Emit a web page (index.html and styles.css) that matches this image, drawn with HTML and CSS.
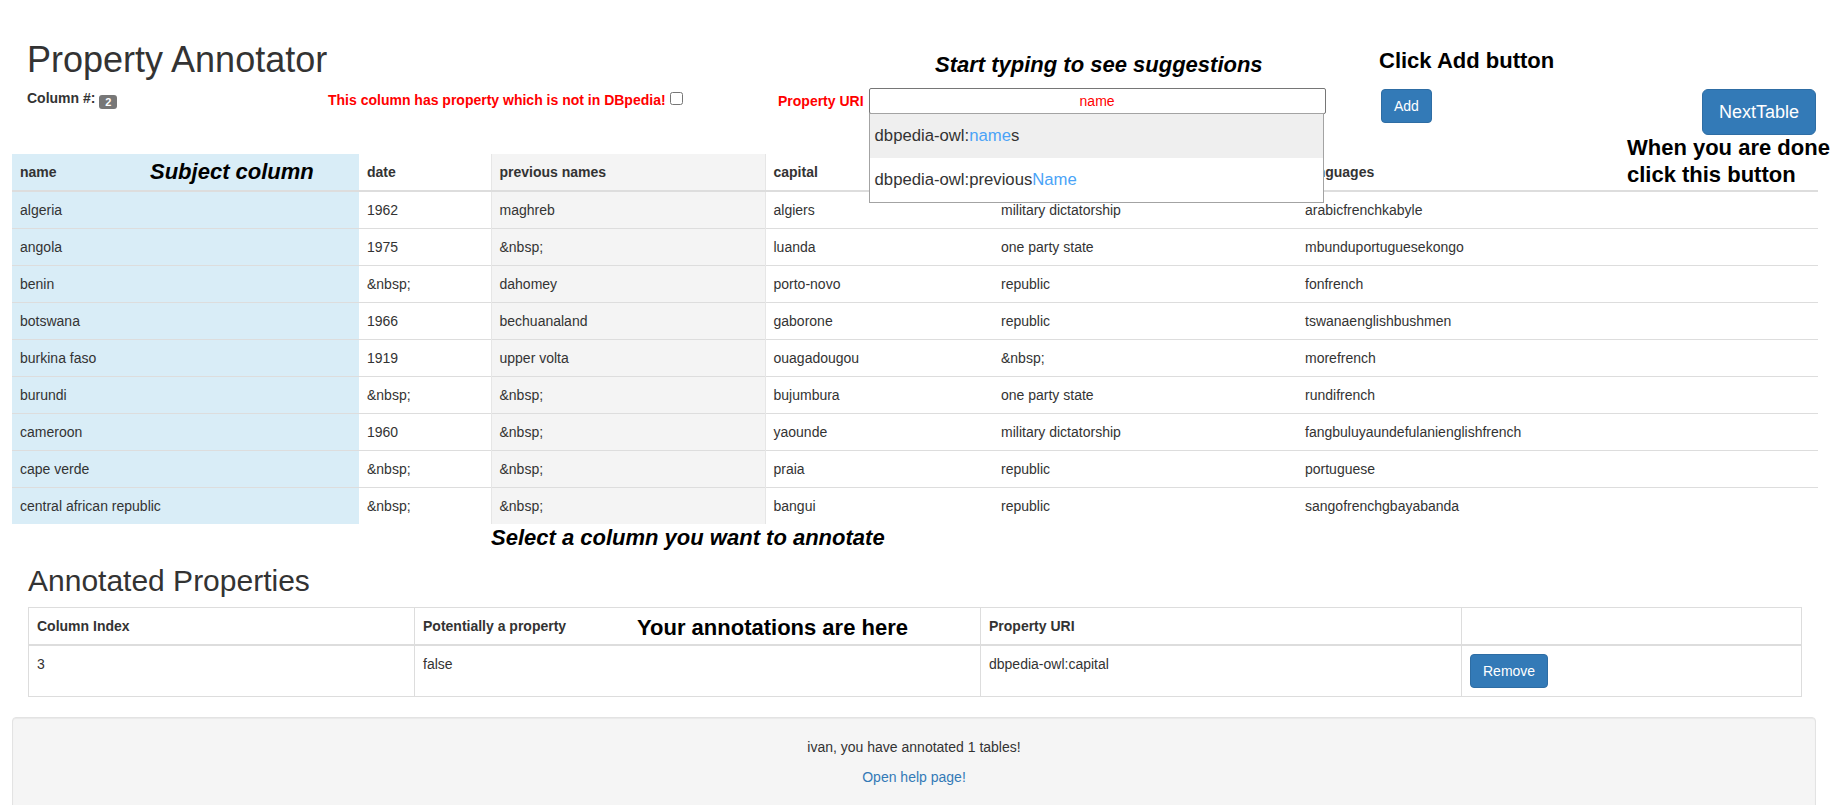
FILE: index.html
```html
<!DOCTYPE html>
<html lang="en">
<head>
<meta charset="utf-8">
<title>Property Annotator</title>
<link rel="stylesheet" href="styles.css">
</head>
<body>
<header class="toolbar">
  <div class="title-col">
    <h1 class="title">Property Annotator</h1>
    <div class="col-num">Column #: <span class="num-badge">2</span></div>
  </div>
  <div class="flag-col">
    <label class="flag">This column has property which is not in DBpedia!<input type="checkbox" class="flag-check"></label>
  </div>
  <div class="uri-col">
    <div class="hint hint-italic hint-typing">Start typing to see suggestions</div>
    <div class="uri-row">
      <label class="uri-label">Property URI</label>
      <div class="uri-field">
        <input class="uri-input" type="text" value="name">
        <ul class="suggest">
          <li class="suggest-item is-active">dbpedia-owl:<span class="hl">name</span>s</li>
          <li class="suggest-item">dbpedia-owl:previous<span class="hl">Name</span></li>
        </ul>
      </div>
    </div>
  </div>
  <div class="add-col">
    <div class="hint hint-add">Click Add button</div>
    <button class="btn btn-primary btn-add">Add</button>
  </div>
  <div class="next-col">
    <button class="btn btn-primary btn-lg">NextTable</button>
    <div class="hint hint-done">When you are done<br>click this button</div>
  </div>
</header>

<table class="data-table">
  <colgroup>
    <col class="w-name"><col class="w-date"><col class="w-prev"><col class="w-cap"><col class="w-gov"><col class="w-lang">
  </colgroup>
  <thead>
    <tr>
      <th class="name-head">name<span class="hint hint-italic hint-subject">Subject column</span></th>
      <th>date</th>
      <th>previous names</th>
      <th>capital</th>
      <th>government type</th>
      <th>languages</th>
    </tr>
  </thead>
  <tbody>
    <tr><td>algeria</td><td>1962</td><td>maghreb</td><td>algiers</td><td>military dictatorship</td><td>arabicfrenchkabyle</td></tr>
    <tr><td>angola</td><td>1975</td><td>&amp;nbsp;</td><td>luanda</td><td>one party state</td><td>mbunduportuguesekongo</td></tr>
    <tr><td>benin</td><td>&amp;nbsp;</td><td>dahomey</td><td>porto-novo</td><td>republic</td><td>fonfrench</td></tr>
    <tr><td>botswana</td><td>1966</td><td>bechuanaland</td><td>gaborone</td><td>republic</td><td>tswanaenglishbushmen</td></tr>
    <tr><td>burkina faso</td><td>1919</td><td>upper volta</td><td>ouagadougou</td><td>&amp;nbsp;</td><td>morefrench</td></tr>
    <tr><td>burundi</td><td>&amp;nbsp;</td><td>&amp;nbsp;</td><td>bujumbura</td><td>one party state</td><td>rundifrench</td></tr>
    <tr><td>cameroon</td><td>1960</td><td>&amp;nbsp;</td><td>yaounde</td><td>military dictatorship</td><td>fangbuluyaundefulanienglishfrench</td></tr>
    <tr><td>cape verde</td><td>&amp;nbsp;</td><td>&amp;nbsp;</td><td>praia</td><td>republic</td><td>portuguese</td></tr>
    <tr><td>central african republic</td><td>&amp;nbsp;</td><td>&amp;nbsp;</td><td>bangui</td><td>republic</td><td>sangofrenchgbayabanda</td></tr>
  </tbody>
</table>

<div class="hint hint-italic hint-select">Select a column you want to annotate</div>

<section class="annotated">
  <h2 class="section-title">Annotated Properties</h2>
  <table class="ann-table">
    <colgroup>
      <col class="a-idx"><col class="a-pot"><col class="a-uri"><col class="a-act">
    </colgroup>
    <thead>
      <tr>
        <th>Column Index</th>
        <th class="pot-head">Potentially a property<span class="hint hint-here">Your annotations are here</span></th>
        <th>Property URI</th>
        <th></th>
      </tr>
    </thead>
    <tbody>
      <tr>
        <td>3</td>
        <td>false</td>
        <td>dbpedia-owl:capital</td>
        <td><button class="btn btn-primary">Remove</button></td>
      </tr>
    </tbody>
  </table>
</section>

<footer class="well">
  <p>ivan, you have annotated 1 tables!</p>
  <p><a href="#help">Open help page!</a></p>
</footer>
</body>
</html>
```

FILE: styles.css
```css
* {
  box-sizing: border-box;
}

html,
body {
  margin: 0;
  overflow: hidden;
}

body {
  font-family: "Liberation Sans", Arial, sans-serif;
  font-size: 14px;
  line-height: 20px;
  color: #333;
  background: #fff;
}

/* ---------- top toolbar ---------- */
.toolbar {
  display: flex;
  align-items: flex-start;
  height: 154px;
}

.title-col {
  width: 301px;
  margin-left: 27px;
  padding-top: 40px;
}

.title {
  margin: 0;
  font-size: 36px;
  line-height: 40px;
  font-weight: 400;
  color: #333;
  white-space: nowrap;
}

.col-num {
  margin-top: 8px;
  font-weight: bold;
  line-height: 20px;
}

.num-badge {
  display: inline-block;
  width: 18px;
  height: 14px;
  background: #777;
  color: #fff;
  font-size: 11px;
  line-height: 14px;
  text-align: center;
  border-radius: 3px;
  vertical-align: -3px;
  font-weight: bold;
}

.flag-col {
  width: 450px;
  padding-top: 90px;
}

.flag {
  color: #f00;
  font-weight: bold;
  line-height: 20px;
  white-space: nowrap;
}

.flag-check {
  width: 13px;
  height: 13px;
  margin: 2px 0 0 4px;
  vertical-align: top;
}

.uri-col {
  width: 548px;
  padding-top: 52px;
}

.hint {
  font-weight: bold;
  color: #000;
  font-size: 22px;
  line-height: 25px;
  white-space: nowrap;
}

.hint-italic {
  font-style: italic;
}

.hint-typing {
  margin-left: 157px;
}

.uri-row {
  display: flex;
  align-items: center;
  margin-top: 11px;
}

.uri-label {
  color: #f00;
  font-weight: bold;
  margin-right: 5px;
  line-height: 20px;
  white-space: nowrap;
}

.uri-field {
  position: relative;
}

.uri-input {
  display: block;
  width: 457px;
  height: 26px;
  margin: 0;
  padding: 1px 2px;
  border: 1px solid #767676;
  border-radius: 2px;
  background: #fff;
  font-family: "Liberation Sans", Arial, sans-serif;
  font-size: 14px;
  color: #f00;
  text-align: center;
}

.suggest {
  position: absolute;
  left: 0;
  top: 25px;
  width: 455px;
  margin: 0;
  padding: 0;
  list-style: none;
  background: #fff;
  border: 1px solid #a3a3a3;
  z-index: 10;
}

.suggest-item {
  height: 44px;
  line-height: 44px;
  padding-left: 5px;
  font-size: 16.7px;
  color: #333;
  white-space: nowrap;
}

.suggest-item.is-active {
  background: #efefef;
}

.hl {
  color: #4aa3f7;
}

.add-col {
  margin-left: 53px;
  padding-top: 48px;
}

.btn {
  display: inline-block;
  padding: 6px 12px;
  font-family: "Liberation Sans", Arial, sans-serif;
  font-size: 14px;
  line-height: 20px;
  border: 1px solid #2e6da4;
  border-radius: 4px;
  background: #337ab7;
  color: #fff;
  cursor: pointer;
  white-space: nowrap;
}

.btn-add {
  display: block;
  margin: 16px 0 0 2px;
}

.btn-lg {
  display: block;
  padding: 10px 16px;
  font-size: 18px;
  line-height: 24px;
  border-radius: 6px;
}

.next-col {
  position: relative;
  margin-left: auto;
  margin-right: 17px;
  padding-top: 89px;
}

.hint-done {
  position: absolute;
  top: 134px;
  left: -75px;
  font-size: 22px;
  line-height: 27px;
  z-index: 5;
}

/* ---------- data table ---------- */
.data-table {
  margin-left: 12px;
  width: 1806px;
  border-collapse: collapse;
  table-layout: fixed;
}

.w-name { width: 347px; }
.w-date { width: 132px; }
.w-prev { width: 274px; }
.w-cap { width: 228px; }
.w-gov { width: 304px; }
.w-lang { width: 521px; }

.data-table th,
.data-table td {
  padding: 8px;
  line-height: 20px;
  text-align: left;
  vertical-align: top;
  border-top: 1px solid #ddd;
  white-space: nowrap;
  overflow: hidden;
}

.data-table thead th {
  border-top: 0;
  border-bottom: 2px solid #ddd;
  vertical-align: bottom;
  font-weight: bold;
}

.data-table tr > :nth-child(1) {
  background: #d9edf7;
}

.data-table tr > :nth-child(3) {
  background: #f4f4f4;
  border-left: 1px solid #e6e6e6;
  border-right: 1px solid #e6e6e6;
}

.data-table th.name-head {
  position: relative;
  overflow: visible;
}

.hint-subject {
  position: absolute;
  top: 5px;
  left: 138px;
}

.hint-select {
  margin: 1px 0 0 491px;
}

/* ---------- annotated properties ---------- */
.annotated {
  padding: 0 32px 0 28px;
}

.section-title {
  margin: 14px 0 10px;
  font-size: 30px;
  line-height: 33px;
  font-weight: 400;
  color: #333;
}

.ann-table {
  width: 1773px;
  border-collapse: collapse;
  table-layout: fixed;
  margin-bottom: 20px;
  border: 1px solid #ddd;
}

.a-idx { width: 386px; }
.a-pot { width: 566px; }
.a-uri { width: 481px; }
.a-act { width: 340px; }

.ann-table th,
.ann-table td {
  border: 1px solid #ddd;
  padding: 8px;
  line-height: 20px;
  vertical-align: top;
  text-align: left;
}

.ann-table thead th {
  border-bottom-width: 2px;
  vertical-align: bottom;
  font-weight: bold;
}

.ann-table .pot-head {
  position: relative;
}

.hint-here {
  position: absolute;
  top: 7px;
  left: 222px;
}

/* ---------- footer ---------- */
.well {
  margin: 0 17px 0 12px;
  padding: 19px;
  background: #f5f5f5;
  border: 1px solid #e3e3e3;
  border-radius: 4px;
  box-shadow: inset 0 1px 1px rgba(0, 0, 0, 0.05);
  text-align: center;
}

.well p {
  margin: 0 0 10px;
}

.well a {
  color: #337ab7;
  text-decoration: none;
}
```
